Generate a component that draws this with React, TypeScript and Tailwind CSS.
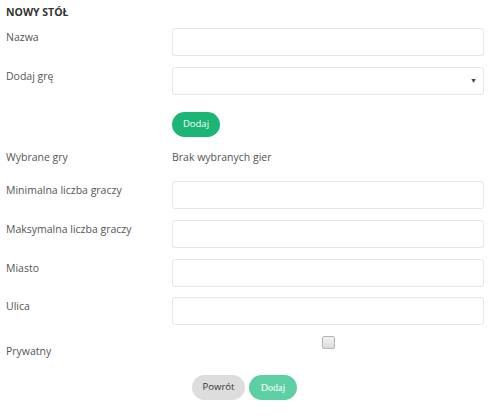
import React from "react";

const Field: React.FC<{ label: string; children: React.ReactNode; className?: string }> = ({
  label,
  children,
  className,
}) => (
  <div className={`flex ${className ?? ""}`}>
    <div className="w-[166px] shrink-0 pt-[1px] leading-4">{label}</div>
    <div className="w-[312px]">{children}</div>
  </div>
);

const Input = () => (
  <input className="block h-[28px] w-full rounded-[3px] border border-[#e6e6e6] bg-white outline-none" />
);

export default function App() {
  return (
    <div
      className="w-[502px] h-[419px] bg-white pl-[6px] text-[10.5px] text-[#555]"
      style={{ fontFamily: '"Open Sans", sans-serif' }}
    >
      <div className="pt-[5px] text-[10.5px] font-bold leading-[14px] text-[#333]">NOWY STÓŁ</div>

      <Field label="Nazwa" className="mt-[9px]">
        <Input />
      </Field>

      <Field label="Dodaj grę" className="mt-[11px]">
        <div className="relative h-[28px] w-full rounded-[3px] border border-[#e6e6e6] bg-white">
          <span className="absolute right-[6px] top-[9px] text-[7px] leading-[8px] text-[#444]">▼</span>
        </div>
      </Field>

      <div className="mt-[17px] flex">
        <div className="w-[166px]" />
        <button className="h-[25px] w-[48px] rounded-full bg-[#1bb575] text-[9.5px] text-white">Dodaj</button>
      </div>

      <div className="mt-[12px] flex leading-4">
        <div className="w-[166px]">Wybrane gry</div>
        <div>Brak wybranych gier</div>
      </div>

      <Field label="Minimalna liczba graczy" className="mt-[16px]">
        <Input />
      </Field>
      <Field label="Maksymalna liczba graczy" className="mt-[11px]">
        <Input />
      </Field>
      <Field label="Miasto" className="mt-[11px]">
        <Input />
      </Field>
      <Field label="Ulica" className="mt-[10px]">
        <Input />
      </Field>

      <div className="mt-[11px] flex">
        <div className="w-[166px] pt-[7px] leading-4">Prywatny</div>
        <div className="flex w-[312px] justify-center">
          <div className="h-[13px] w-[13px] rounded-[2px] border border-[#b5b5b5] bg-gradient-to-b from-[#f2f2f2] to-[#dcdcdc]" />
        </div>
      </div>

      <div className="mt-[16px] flex gap-[4px] pl-[186px]">
        <button className="h-[25px] w-[53px] rounded-full bg-[#dddddd] text-[9.5px] text-[#333]">Powrót</button>
        <button
          className="h-[25px] w-[48px] rounded-full bg-[#5ccfa3] text-[10px] text-white"
          style={{ fontFamily: '"Liberation Serif", serif' }}
        >
          Dodaj
        </button>
      </div>
    </div>
  );
}
